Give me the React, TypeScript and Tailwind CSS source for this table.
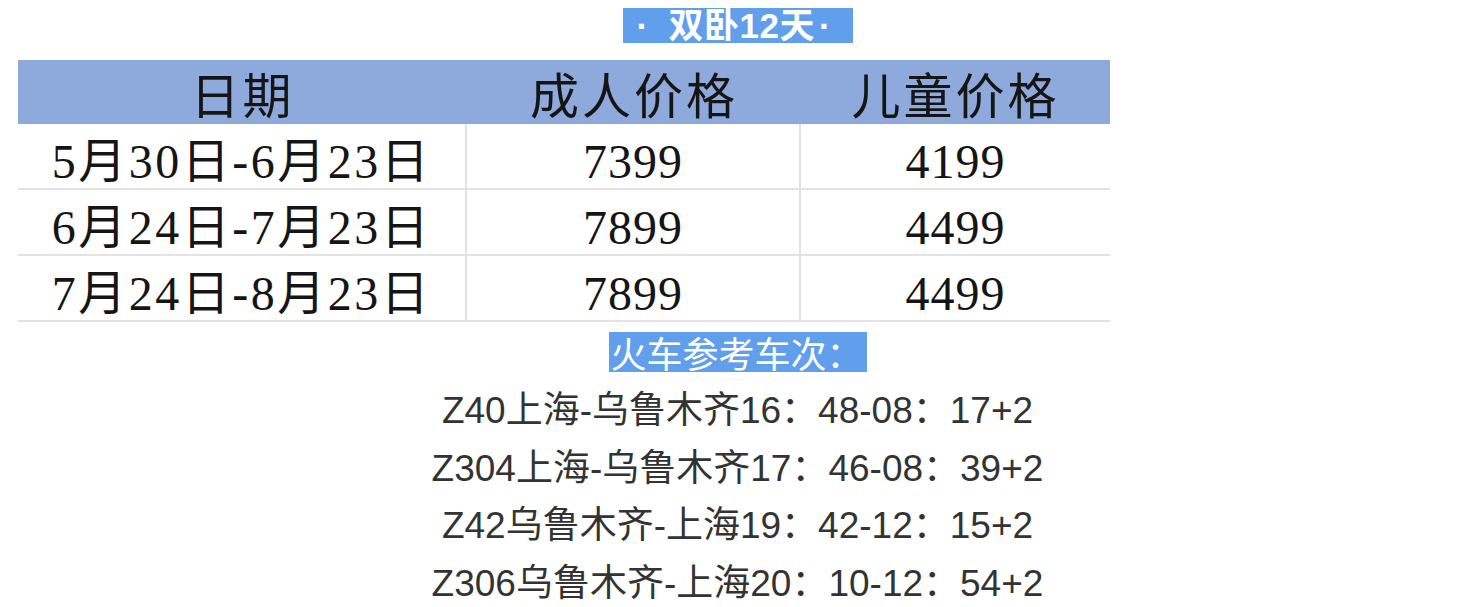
import React from 'react';

const rows = [
  { date: '5月30日-6月23日', adult: '7399', child: '4199' },
  { date: '6月24日-7月23日', adult: '7899', child: '4499' },
  { date: '7月24日-8月23日', adult: '7899', child: '4499' },
];

const trains = [
  'Z40上海-乌鲁木齐16：48-08：17+2',
  'Z304上海-乌鲁木齐17：46-08：39+2',
  'Z42乌鲁木齐-上海19：42-12：15+2',
  'Z306乌鲁木齐-上海20：10-12：54+2',
];

const serif = { fontFamily: '"Liberation Serif", "Noto Sans CJK SC", serif' };

export default function App() {
  return (
    <div className="w-[1475px] h-[607px] bg-white flex flex-col items-center overflow-hidden">
      {/* title */}
      <div
        className="mt-[8px] h-[35px] w-[230px] bg-[#619eec] text-white font-bold text-[35px] leading-[35px] flex items-center pl-[14px]"
        style={{ fontFamily: '"Liberation Sans", "Noto Sans CJK SC", sans-serif' }}
      >
        <span className="w-[32px]">·</span>
        <span className="tracking-[0.5px]">双卧12天</span>
        <span className="ml-[4px]">·</span>
      </div>

      {/* price table */}
      <div className="mt-[17px] self-start ml-[18px] w-[1092px] text-[#151515]" style={serif}>
        <div className="grid grid-cols-[449px_334px_309px] h-[64px] bg-[#8eaadc] text-[49px] leading-[64px] text-center tracking-[3px] overflow-hidden">
          <div className="h-[64px] pt-[6px]">日期</div>
          <div className="h-[64px] pt-[6px]">成人价格</div>
          <div className="h-[64px] pt-[6px]">儿童价格</div>
        </div>
        {rows.map((r) => (
          <div
            key={r.date}
            className="grid grid-cols-[449px_334px_309px] h-[66px] border-b-2 border-[#e2e2e2] text-[48px] leading-[64px] text-center"
          >
            <div className="h-[64px] border-r-2 border-[#e2e2e2] tracking-[2.5px] pt-[6px]">{r.date}</div>
            <div className="h-[64px] border-r-2 border-[#e2e2e2] tracking-[1px] pt-[6px]">{r.adult}</div>
            <div className="h-[64px] tracking-[1px] pt-[6px]">{r.child}</div>
          </div>
        ))}
      </div>

      {/* train heading */}
      <div
        className="mt-[10px] h-[40px] w-[258px] bg-[#619eec] text-white text-[36px] leading-[40px] pl-[2px]"
        style={{ fontFamily: '"Noto Sans CJK SC", sans-serif' }}
      >
        火车参考车次：
      </div>

      <div
        className="mt-[10px] text-center text-[#333333] text-[37px] leading-[57.5px]"
        style={{ fontFamily: '"Liberation Sans", "Noto Sans CJK SC", sans-serif' }}
      >
        {trains.map((t) => (
          <div key={t}>{t}</div>
        ))}
      </div>
    </div>
  );
}
